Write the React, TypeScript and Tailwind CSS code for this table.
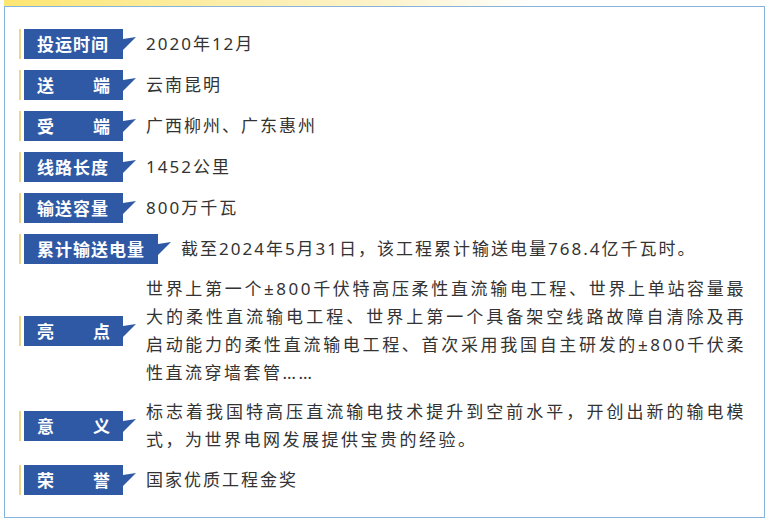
import type { ReactNode } from 'react'

type Row = {
  label: string[]
  value: ReactNode
  multi?: boolean
}

const rows: Row[] = [
  { label: ['投运时间'], value: '2020年12月' },
  { label: ['送', '端'], value: '云南昆明' },
  { label: ['受', '端'], value: '广西柳州、广东惠州' },
  { label: ['线路长度'], value: '1452公里' },
  { label: ['输送容量'], value: '800万千瓦' },
  { label: ['累计输送电量'], value: '截至2024年5月31日，该工程累计输送电量768.4亿千瓦时。' },
  {
    label: ['亮', '点'],
    multi: true,
    value:
      '世界上第一个±800千伏特高压柔性直流输电工程、世界上单站容量最大的柔性直流输电工程、世界上第一个具备架空线路故障自清除及再启动能力的柔性直流输电工程、首次采用我国自主研发的±800千伏柔性直流穿墙套管……',
  },
  {
    label: ['意', '义'],
    multi: true,
    value: '标志着我国特高压直流输电技术提升到空前水平，开创出新的输电模式，为世界电网发展提供宝贵的经验。',
  },
  { label: ['荣', '誉'], value: '国家优质工程金奖' },
]

function Label({ parts }: { parts: string[] }) {
  const wide = parts.length === 1 && parts[0].length > 4
  return (
    <div className="flex items-center shrink-0" style={{ fontFamily: '"Noto Sans CJK SC", sans-serif' }}>
      {/* 金色竖条 */}
      <div className="w-[2px] h-[30px] bg-[#f0d488] mr-[3px]" />
      <div
        className={`h-[30px] bg-[#2f59a5] text-white font-bold text-[17px] flex items-center px-[13px] whitespace-nowrap ${
          parts.length > 1 ? 'justify-between w-[99px]' : wide ? 'tracking-[1px]' : 'w-[99px] tracking-[1px]'
        }`}
      >
        {parts.map(p => (
          <span key={p}>{p}</span>
        ))}
      </div>
      <svg width="13" height="30" viewBox="0 0 13 30" className="block">
        <polygon points="0,10 13,8 0,21" fill="#2f59a5" />
      </svg>
    </div>
  )
}

export default function App() {
  return (
    <div
      className="w-[771px] h-[521px] bg-white overflow-hidden text-[#333]"
      style={{ fontFamily: '"Noto Sans", "Noto Sans CJK SC", sans-serif' }}
    >
      <div className="ml-[4px] w-[761px] h-[6px] bg-gradient-to-r from-[#fde671] via-[#fdf3cc] via-50% to-white to-70%" />
      <div className="ml-[4px] w-[761px] h-[512px] border border-[#86b3dc] pl-[14px] pr-[10px] pt-[22px] flex flex-col gap-[11px]">
        {rows.map((r, i) => (
          <div key={i} className="flex items-center">
            <Label parts={r.label} />
            <div
              className={`ml-[10px] text-[17px] ${
                r.multi ? 'leading-[28px] text-justify w-[600px] tracking-[2.5px]' : 'leading-[30px] whitespace-nowrap tracking-[2px]'
              }`}
            >
              {r.value}
            </div>
          </div>
        ))}
      </div>
    </div>
  )
}
